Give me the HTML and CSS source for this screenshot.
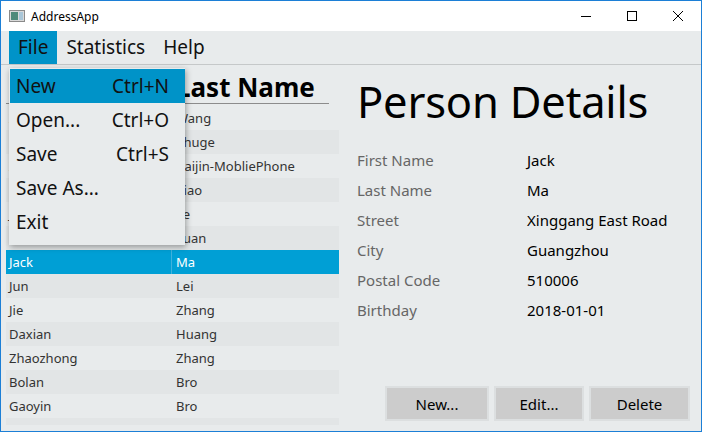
FILE: index.html
```html
<!DOCTYPE html>
<html>
<head>
<meta charset="utf-8">
<link rel="stylesheet" href="styles.css">
</head>
<body>
<div class="window">
  <div class="titlebar">
    <svg class="appicon" width="16" height="14" viewBox="0 0 16 14">
      <rect x="0.5" y="1.5" width="15" height="11" fill="#d9d9d9" stroke="#8a8a8a"/>
      <rect x="2" y="3" width="7" height="8" fill="#4f8a7a"/>
      <rect x="10" y="3" width="4" height="8" fill="#a9c6d8"/>
    </svg>
    <span class="title">AddressApp</span>
    <div class="controls">
      <svg class="ctl" width="46" height="30" viewBox="0 0 46 30"><line x1="18" y1="15.5" x2="28" y2="15.5" stroke="#000" stroke-width="1"/></svg>
      <svg class="ctl" width="46" height="30" viewBox="0 0 46 30"><rect x="18.5" y="10.5" width="9" height="9" fill="none" stroke="#000" stroke-width="1"/></svg>
      <svg class="ctl" width="46" height="30" viewBox="0 0 46 30"><path d="M18 10 L28 20 M28 10 L18 20" stroke="#000" stroke-width="1"/></svg>
    </div>
  </div>
  <div class="menubar">
    <span class="menu active">File</span>
    <span class="menu">Statistics</span>
    <span class="menu">Help</span>
  </div>
  <div class="main">
    <div class="left">
      <div class="table">
        <div class="thead">
          <div class="th">First Name</div>
          <div class="th">Last Name</div>
        </div>
        <div class="tbody">
          <div class="tr"><div class="td">Xiaoming</div><div class="td">Wang</div></div>
          <div class="tr odd"><div class="td">Liang</div><div class="td">Zhuge</div></div>
          <div class="tr"><div class="td">Xiaomi</div><div class="td">Baijin-MobliePhone</div></div>
          <div class="tr odd"><div class="td">Fei</div><div class="td">Xiao</div></div>
          <div class="tr"><div class="td">Jian</div><div class="td">Ye</div></div>
          <div class="tr odd"><div class="td">Lin</div><div class="td">Yuan</div></div>
          <div class="tr sel"><div class="td">Jack</div><div class="td">Ma</div></div>
          <div class="tr odd"><div class="td">Jun</div><div class="td">Lei</div></div>
          <div class="tr"><div class="td">Jie</div><div class="td">Zhang</div></div>
          <div class="tr odd"><div class="td">Daxian</div><div class="td">Huang</div></div>
          <div class="tr"><div class="td">Zhaozhong</div><div class="td">Zhang</div></div>
          <div class="tr odd"><div class="td">Bolan</div><div class="td">Bro</div></div>
          <div class="tr"><div class="td">Gaoyin</div><div class="td">Bro</div></div>
          <div class="tr odd"><div class="td"></div><div class="td"></div></div>
        </div>
      </div>
    </div>
    <div class="right">
      <h1 class="heading">Person Details</h1>
      <div class="details">
        <span class="label">First Name</span><span class="value">Jack</span>
        <span class="label">Last Name</span><span class="value">Ma</span>
        <span class="label">Street</span><span class="value">Xinggang East Road</span>
        <span class="label">City</span><span class="value">Guangzhou</span>
        <span class="label">Postal Code</span><span class="value">510006</span>
        <span class="label">Birthday</span><span class="value">2018-01-01</span>
      </div>
      <div class="buttons">
        <button class="btn btn-new">New...</button>
        <button class="btn btn-edit">Edit...</button>
        <button class="btn btn-del">Delete</button>
      </div>
    </div>
  </div>
  <div class="dropdown">
    <div class="item hl"><span>New</span><span class="acc">Ctrl+N</span></div>
    <div class="item"><span>Open...</span><span class="acc">Ctrl+O</span></div>
    <div class="item"><span>Save</span><span class="acc">Ctrl+S</span></div>
    <div class="item"><span>Save As...</span></div>
    <div class="item"><span>Exit</span></div>
  </div>
</div>
</body>
</html>
```

FILE: styles.css
```css
* { box-sizing: border-box; }
html, body { margin: 0; padding: 0; }
body {
  width: 702px;
  height: 432px;
  overflow: hidden;
  font-family: "Noto Sans", "Open Sans", sans-serif;
  background: #e8ebec;
}
.window {
  position: relative;
  width: 702px;
  height: 432px;
  border: 1px solid #1c7fd6;
  display: flex;
  flex-direction: column;
  background: #e8ebec;
}
.titlebar {
  height: 30px;
  background: #fff;
  display: flex;
  align-items: center;
  padding-left: 8px;
  flex: none;
}
.appicon { margin-right: 6px; }
.title {
  font-size: 12px;
  color: #000;
}
.controls {
  margin-left: auto;
  display: flex;
}
.ctl { display: block; }
.menubar {
  height: 34px;
  flex: none;
  display: flex;
  padding-left: 8px;
  border-bottom: 1px solid #c5c8c9;
}
.menu {
  font-size: 19px;
  line-height: 33px;
  height: 33px;
  padding: 0 9px;
  color: #111;
}
.menu.active { background: #0093c8; }
.main {
  flex: 1;
  display: flex;
  min-height: 0;
}
.left {
  width: 344px;
  padding: 0 0 0 5px;
  flex: none;
}
.table {
  width: 333px;
  height: 360px;
  overflow: hidden;
}
.thead {
  display: grid;
  grid-template-columns: 166px 1fr;
  height: 39px;
  border-bottom: 1px solid #8c8c8c;
  margin-right: 10px;
}
.th {
  font-size: 26px;
  font-weight: bold;
  line-height: 30px;
  padding: 7px 0 0 4px;
  color: #000;
  white-space: nowrap;
}
.tbody { padding-top: 2px; }
.tr {
  display: grid;
  grid-template-columns: 166px 1fr;
  height: 24px;
  background: #e8ebec;
}
.tr.odd { background: #e2e5e6; }
.tr.sel { background: #009fd5; color: #fff; }
.tr.sel .td:first-child { border-right: 1px solid #3fb1dc; }
.td {
  font-size: 13px;
  line-height: 24px;
  padding-left: 3px;
  color: #333;
  white-space: nowrap;
}
.tr .td:nth-child(2) { padding-left: 4px; }
.tr.sel .td { color: #fff; }
.right {
  flex: 1;
  display: flex;
  flex-direction: column;
  padding: 6px 11px 10px 12px;
}
.heading {
  margin: 0;
  font-size: 43.5px;
  font-weight: normal;
  line-height: 60px;
  color: #000;
  letter-spacing: -0.2px;
}
.details {
  margin-top: 14px;
  display: grid;
  grid-template-columns: 170px 1fr;
  grid-auto-rows: 30px;
  align-items: center;
  font-size: 15px;
}
.label { color: #666; }
.value { color: #000; }
.buttons {
  margin-top: auto;
  display: flex;
  justify-content: flex-end;
  gap: 5px;
}
.btn {
  font-family: inherit;
  font-size: 15px;
  color: #000;
  background: #cccccc;
  border: 2px solid #dcdfe0;
  height: 35px;
  padding: 0;
}
.btn-new { width: 104px; }
.btn-edit { width: 90px; }
.btn-del { width: 101px; }
.dropdown {
  position: absolute;
  left: 8px;
  top: 67px;
  width: 176px;
  padding: 1px 0 6px 1px;
  background: #e8ebec;
  box-shadow: 1px 2px 6px rgba(0,0,0,0.35);
}
.item {
  height: 34px;
  display: flex;
  justify-content: space-between;
  align-items: center;
  padding: 0 16px 0 6px;
  font-size: 19px;
  color: #111;
}
.item.hl { background: #0093c8; }
```
